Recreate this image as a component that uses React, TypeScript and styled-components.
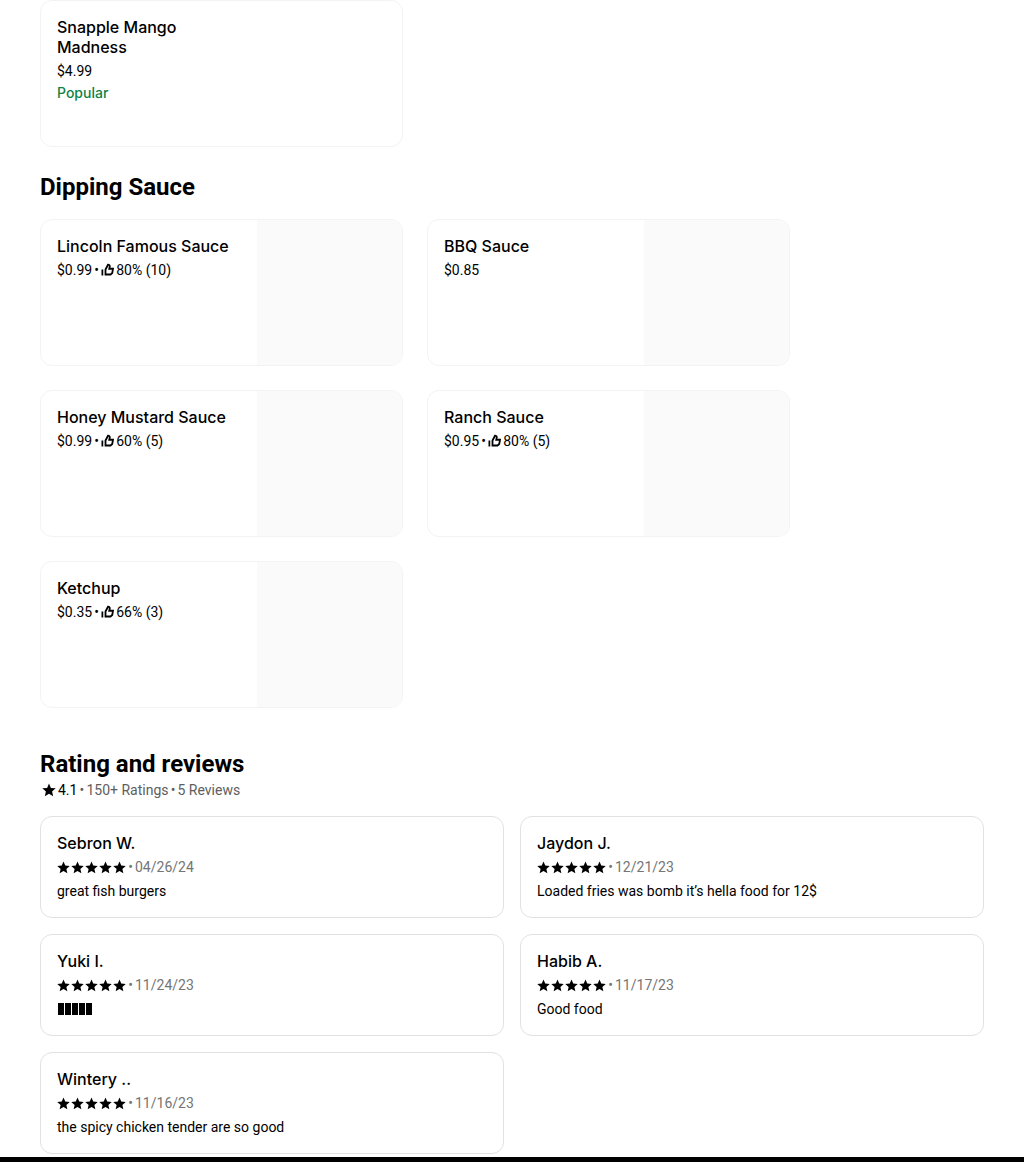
import React from "react";
import styled, { createGlobalStyle } from "styled-components";

const GlobalStyle = createGlobalStyle`
  *, *::before, *::after { box-sizing: border-box; }
  body {
    margin: 0;
    background: #fff;
    color: #000;
    font-family: Roboto, "Liberation Sans", sans-serif;
    font-size: 14px;
    line-height: 20px;
  }
  h2, h3, p, ul { margin: 0; padding: 0; }
  ul { list-style: none; }
`;

const Page = styled.main`
  padding: 0 40px 3px;
`;

const Section = styled.section<{ $space?: number }>`
  margin-top: ${(p) => p.$space ?? 0}px;
`;

const Heading = styled.h2`
  font-size: 24px;
  line-height: 32px;
  font-weight: 700;
`;

const MenuGrid = styled.ul`
  display: grid;
  grid-template-columns: repeat(auto-fill, 363px);
  gap: 24px;
`;

const MenuHeading = styled(Heading)`
  margin-bottom: 16px;
`;

const ItemCard = styled.a`
  display: flex;
  height: 147px;
  border: 1px solid #f3f3f3;
  border-radius: 12px;
  overflow: hidden;
  color: inherit;
  text-decoration: none;
`;

const ItemDetails = styled.div`
  flex: 1;
  min-width: 0;
  padding: 16px;
  display: flex;
  flex-direction: column;
  gap: 4px;
`;

const ItemPhoto = styled.div<{ $empty?: boolean }>`
  flex: 0 0 145px;
  background: ${(p) => (p.$empty ? "transparent" : "#fafafa")};
`;

const Name = styled.h3`
  font-family: Inter, "Liberation Sans", sans-serif;
  font-size: 16px;
  line-height: 20px;
  font-weight: 500;
`;

const Line = styled.p`
  display: flex;
  align-items: center;
  line-height: 20px;
`;

const Dot = styled.span`
  width: 9px;
  text-align: center;
`;

const ThumbSvg = styled.svg`
  width: 13px;
  height: 14px;
  margin-right: 2px;
`;

const Popular = styled.p`
  font-family: Inter, "Liberation Sans", sans-serif;
  color: #0e8345;
  font-weight: 500;
  line-height: 16px;
`;

const Summary = styled(Line)`
  padding-left: 2px;
  margin-bottom: 16px;
  color: #5e5e5e;
`;

const Score = styled.span`
  color: #000;
  margin-left: 2px;
`;

const ReviewGrid = styled.ul`
  display: grid;
  grid-template-columns: repeat(2, minmax(0, 1fr));
  gap: 16px;
`;

const ReviewCard = styled.li`
  display: flex;
  flex-direction: column;
  gap: 4px;
  padding: 16px;
  border: 1px solid #e2e2e2;
  border-radius: 12px;
`;

const Stars = styled.span`
  display: flex;
  gap: 1px;
`;

const Muted = styled(Line)`
  color: #757575;
`;

const StarSvg = styled.svg<{ $size: number }>`
  width: ${(p) => p.$size}px;
  height: ${(p) => p.$size}px;
  fill: #000;
`;

const Blocks = styled.span`
  display: flex;
  align-items: center;
  gap: 1px;
  height: 20px;
  padding-left: 1px;
`;

const Block = styled.span`
  width: 6px;
  height: 12px;
  background: #000;
`;

const Footer = styled.footer`
  height: 5px;
  background: #000;
`;

const Star = ({ size = 13 }: { size?: number }) => (
  <StarSvg $size={size} viewBox="0 0 24 24" aria-hidden="true">
    <path d="m12 1 3.2 7.4 8.3.8-6.2 5.400 1.800 8.200-7.100-4.200-7.100 4.200 1.800-8.200L.5 9.200l8.300-.8z" />
  </StarSvg>
);

const Thumb = () => (
  <ThumbSvg viewBox="0 0 26 28" aria-hidden="true">
    <path fill="#000" d="M1 13h3.500v12H1z" />
    <path
      fill="none"
      stroke="#000"
      strokeWidth="3.600"
      d="M9 23V13l5-9.500c2.800 0 4 1.500 3.500 3.500l-1 4.500H24L22.500 20l-3.500 3z"
    />
  </ThumbSvg>
);

type Item = { name: string; price: string; rating?: string; popular?: boolean };

const drinks: Item[] = [
  { name: "Snapple Mango Madness", price: "$4.99", popular: true },
];

const sauces: Item[] = [
  { name: "Lincoln Famous Sauce", price: "$0.99", rating: "80% (10)" },
  { name: "BBQ Sauce", price: "$0.85" },
  { name: "Honey Mustard Sauce", price: "$0.99", rating: "60% (5)" },
  { name: "Ranch Sauce", price: "$0.95", rating: "80% (5)" },
  { name: "Ketchup", price: "$0.35", rating: "66% (3)" },
];

type Review = { name: string; date: string; text?: string; blocks?: number };

const reviews: Review[] = [
  { name: "Sebron W.", date: "04/26/24", text: "great fish burgers" },
  { name: "Jaydon J.", date: "12/21/23", text: "Loaded fries was bomb it’s hella food for 12$" },
  { name: "Yuki I.", date: "11/24/23", blocks: 5 },
  { name: "Habib A.", date: "11/17/23", text: "Good food" },
  { name: "Wintery ..", date: "11/16/23", text: "the spicy chicken tender are so good" },
];

const Menu = ({ items }: { items: Item[] }) => (
  <MenuGrid>
    {items.map((item) => (
      <li key={item.name}>
        <ItemCard href="#">
          <ItemDetails>
            <Name>{item.name}</Name>
            <Line>
              {item.price}
              {item.rating && (
                <>
                  <Dot>•</Dot>
                  <Thumb />
                  {item.rating}
                </>
              )}
            </Line>
            {item.popular && <Popular>Popular</Popular>}
          </ItemDetails>
          <ItemPhoto $empty={item.popular} />
        </ItemCard>
      </li>
    ))}
  </MenuGrid>
);

export default function App() {
  return (
    <>
      <GlobalStyle />
      <Page>
        <Section>
          <Menu items={drinks} />
        </Section>
        <Section $space={24}>
          <MenuHeading>Dipping Sauce</MenuHeading>
          <Menu items={sauces} />
        </Section>
        <Section $space={40}>
          <Heading>Rating and reviews</Heading>
          <Summary>
            <Star size={14} />
            <Score>4.1</Score>
            <Dot>•</Dot>150+ Ratings<Dot>•</Dot>5 Reviews
          </Summary>
          <ReviewGrid>
            {reviews.map((r) => (
              <ReviewCard key={r.name}>
                <Name>{r.name}</Name>
                <Muted>
                  <Stars>
                    {[0, 1, 2, 3, 4].map((n) => (
                      <Star key={n} />
                    ))}
                  </Stars>
                  <Dot>•</Dot>
                  {r.date}
                </Muted>
                {r.blocks ? (
                  <Blocks>
                    {Array.from({ length: r.blocks }, (_, n) => (
                      <Block key={n} />
                    ))}
                  </Blocks>
                ) : (
                  <p>{r.text}</p>
                )}
              </ReviewCard>
            ))}
          </ReviewGrid>
        </Section>
      </Page>
      <Footer />
    </>
  );
}
